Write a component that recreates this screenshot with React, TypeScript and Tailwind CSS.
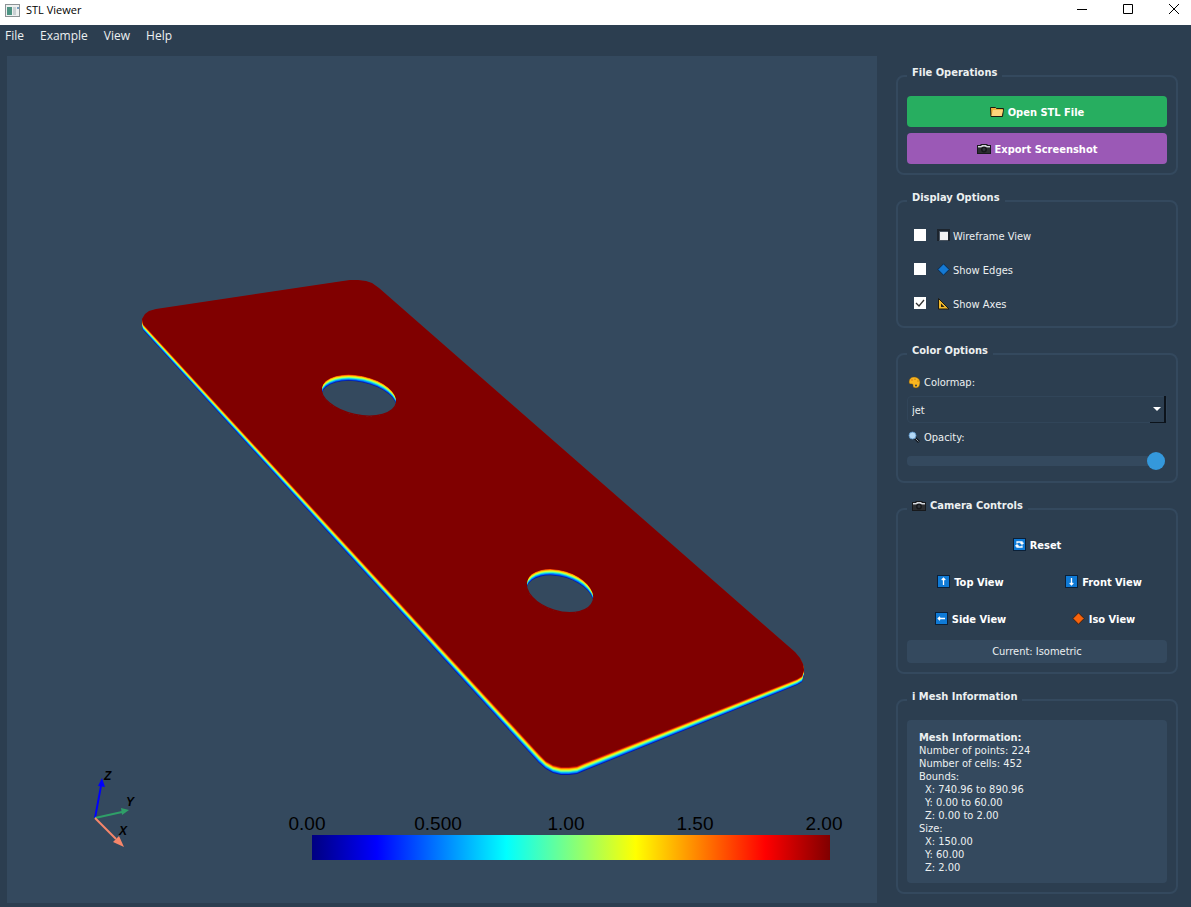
import { ReactNode, useState } from 'react';

const JET = ['#0018b0', '#0060f8', '#00a8ff', '#30f0d0', '#90ff80', '#e8ff20', '#ffc000', '#ff6000', '#c01000'];

// x, y of the top face and how far the bottom face sits below it
const OUTLINE: [number, number, number][] = [
  [143, 324, 6], [142, 319, 6], [145, 314, 5], [149, 311, 5], [156, 309, 5],
  [343, 281, 4], [350, 280, 4], [358, 280, 4], [366, 281, 4], [372, 283, 4], [379, 288, 4],
  [795, 652, 4], [800, 658, 4], [803, 664, 4], [804, 670, 4], [802, 676, 6], [797, 679, 6],
  [584, 763, 8], [577, 766, 8], [569, 767, 8], [561, 767, 8], [553, 765, 8], [546, 761, 8], [539, 754, 9],
];

const HOLES = [
  { id: 'hole-a', cx: 359, cy: 395, rx: 38.4, ry: 20, angle: 12, depth: 7 },
  { id: 'hole-b', cx: 560, cy: 590.5, rx: 34.8, ry: 20.6, angle: 17, depth: 7 },
];

const SCALE = [
  { x: 307, label: '0.00' },
  { x: 438, label: '0.500' },
  { x: 566, label: '1.00' },
  { x: 695, label: '1.50' },
  { x: 824, label: '2.00' },
];

const outlineAt = (t: number) => OUTLINE.map(([x, y, d]) => `${x},${y + d * t}`).join(' ');

function Viewport() {
  return (
    <main className="relative min-w-0 flex-1 bg-[#34495e]">
      <svg viewBox="7 56 870 847" className="absolute inset-0 h-full w-full">
        <defs>
          <linearGradient id="jet">
            <stop offset="0" stopColor="#000080" />
            <stop offset="0.125" stopColor="#0000ff" />
            <stop offset="0.375" stopColor="#00ffff" />
            <stop offset="0.625" stopColor="#ffff00" />
            <stop offset="0.875" stopColor="#ff0000" />
            <stop offset="1" stopColor="#800000" />
          </linearGradient>
          {HOLES.map((h) => (
            <clipPath id={h.id} key={h.id}>
              <ellipse cx={h.cx} cy={h.cy} rx={h.rx} ry={h.ry} transform={`rotate(${h.angle} ${h.cx} ${h.cy})`} />
            </clipPath>
          ))}
        </defs>

        {JET.map((color, i) => (
          <polygon key={color} points={outlineAt(1 - i / JET.length)} fill={color} />
        ))}
        <polygon points={outlineAt(0)} fill="#800000" />

        {HOLES.map((h) => (
          <g key={h.id}>
            <g clipPath={`url(#${h.id})`}>
              {[...JET].reverse().concat('#34495e').map((color, i) => {
                const cy = h.cy + (h.depth * i) / JET.length;
                return (
                  <ellipse key={color} cx={h.cx} cy={cy} rx={h.rx} ry={h.ry} fill={color} transform={`rotate(${h.angle} ${h.cx} ${cy})`} />
                );
              })}
            </g>
            <ellipse cx={h.cx} cy={h.cy} rx={h.rx} ry={h.ry} fill="none" stroke="#800000" strokeWidth="1.500" transform={`rotate(${h.angle} ${h.cx} ${h.cy})`} />
          </g>
        ))}

        {/* orientation axes */}
        <path d="M95 818 101 786" stroke="#0000ff" strokeWidth="2" />
        <path d="M102 778 105 787 98 786Z" fill="#0000ff" />
        <path d="M95 818 122 812" stroke="#2f9f68" strokeWidth="2" />
        <path d="M129 810 121 808 122 815Z" fill="#2f9f68" />
        <path d="M95 818 116 839" stroke="#f7866a" strokeWidth="2" />
        <path d="M124 847 119 836 113 842Z" fill="#f7866a" />
        <g className="fill-black font-['Liberation_Sans'] text-[12px] font-bold italic">
          <text x="104" y="780">Z</text>
          <text x="126" y="806">Y</text>
          <text x="119" y="835">X</text>
        </g>

        <rect x="312" y="835" width="518" height="25" fill="url(#jet)" />
        <g className="fill-black font-['Liberation_Sans'] text-[19px]" textAnchor="middle">
          {SCALE.map((s) => (
            <text key={s.label} x={s.x} y="830">{s.label}</text>
          ))}
        </g>
      </svg>
    </main>
  );
}

function CameraIcon() {
  return (
    <svg viewBox="0 0 14 12" className="h-3 w-3.5">
      <path d="M0 2h3l1-1h6l1 1h3v9H0z" fill="#17191c" />
      <path d="M1 3h3l1-1h4l1 1h3v1.500H1z" fill="#d5d8dc" />
      <path d="M1 5h12v5H1z" fill="#2c2e31" />
      <circle cx="7" cy="6.500" r="3" fill="#17191c" />
      <circle cx="7" cy="6.500" r="1.400" fill="#33383e" />
    </svg>
  );
}

function FolderIcon() {
  return (
    <svg viewBox="0 0 14 12" className="h-3 w-3.5">
      <path d="M.5 1.500h5l1 1h7l-1 8H1z" fill="#f0b440" stroke="#1d1a10" />
      <path d="M3 4h10l-1.500 6H1.500z" fill="#ffd47c" />
    </svg>
  );
}

function ArrowTile({ children }: { children: ReactNode }) {
  return (
    <svg viewBox="0 0 13 13" className="h-[13px] w-[13px]" fill="none" stroke="#fff" strokeWidth="1.300">
      <rect x=".5" y=".5" width="12" height="12" fill="#0f7ad6" stroke="#0b2038" strokeWidth="1" />
      {children}
    </svg>
  );
}

function Group({ title, children }: { title: ReactNode; children: ReactNode }) {
  return (
    <fieldset className="min-w-0 rounded-lg border-2 border-[#34495e] p-[9px]">
      <legend className="flex items-center gap-1 px-[5px] pb-1.5 font-bold leading-4">{title}</legend>
      {children}
    </fieldset>
  );
}

function Check({ label, icon, defaultChecked }: { label: string; icon: ReactNode; defaultChecked?: boolean }) {
  return (
    <label className="flex h-7 items-center gap-[3px] pl-[7px]">
      <span className="relative mr-2 h-3 w-3">
        <input type="checkbox" defaultChecked={defaultChecked} className="peer block h-3 w-3 appearance-none bg-white" />
        <svg viewBox="0 0 12 12" className="pointer-events-none invisible absolute inset-0 h-3 w-3 peer-checked:visible">
          <path d="M2 6 5 9 10 3" fill="none" stroke="#333" strokeWidth="1.300" />
        </svg>
      </span>
      {icon}
      <span className="pt-0.5">{label}</span>
    </label>
  );
}

function ViewButton({ icon, label, onClick }: { icon: ReactNode; label: string; onClick: () => void }) {
  return (
    <button onClick={onClick} className="flex h-[31px] items-center justify-center gap-1 font-bold text-white">
      {icon}
      <span className="pt-0.5">{label}</span>
    </button>
  );
}

export default function App() {
  const [view, setView] = useState('Isometric');

  return (
    <div className="flex min-h-screen flex-col bg-[#2c3e50] font-['DejaVu_Sans_Condensed','DejaVu_Sans',sans-serif] text-[11px] leading-[17px] text-[#ecf0f1]">
      <header className="flex h-[25px] items-start justify-between bg-white font-['Open_Sans'] text-black">
        <div className="flex items-center gap-1.5 pl-[5px] leading-5">
          <svg viewBox="0 0 15 13" className="h-[13px] w-[15px]">
            <rect x=".5" y=".5" width="14" height="12" fill="#eef0f0" stroke="#8d9396" />
            <rect x="2" y="3" width="5" height="8" fill="#4d9483" />
            <rect x="8" y="3" width="3" height="8" fill="#c9d0d3" />
            <rect x="12" y="3" width="2" height="2" fill="#7a9fc0" />
          </svg>
          <h1>STL Viewer</h1>
        </div>
        <div className="flex h-[18px] gap-9 pr-3">
          <button aria-label="Minimize">
            <svg viewBox="0 0 10 10" className="h-2.5 w-2.5"><path d="M0 5.500h10" stroke="#000" /></svg>
          </button>
          <button aria-label="Maximize">
            <svg viewBox="0 0 10 10" className="h-2.5 w-2.5"><path d="M.5.5h9v9h-9z" fill="none" stroke="#000" /></svg>
          </button>
          <button aria-label="Close">
            <svg viewBox="0 0 10 10" className="h-2.5 w-2.5"><path d="M0 0 10 10M10 0 0 10" stroke="#000" /></svg>
          </button>
        </div>
      </header>

      <nav className="flex h-[25px] gap-4 px-[5px] font-['Open_Sans'] text-[12px] leading-[22px]">
        <button className="self-start">File</button>
        <button className="self-start">Example</button>
        <button className="self-start">View</button>
        <button className="self-start">Help</button>
      </nav>

      <div className="flex flex-1 gap-[19px] pb-1 pl-[7px] pr-[13px] pt-1.5">
        <Viewport />

        <aside className="flex w-[282px] shrink-0 flex-col gap-[15px] pb-2 pt-[9px]">
          <Group title="File Operations">
            <div className="flex flex-col gap-1.5 font-bold text-white">
              <button className="flex h-[31px] items-center justify-center gap-1 rounded bg-[#27ae60]">
                <FolderIcon />
                <span className="pt-0.5">Open STL File</span>
              </button>
              <button className="flex h-[31px] items-center justify-center gap-1 rounded bg-[#9b59b6]">
                <CameraIcon />
                <span className="pt-0.5">Export Screenshot</span>
              </button>
            </div>
          </Group>

          <Group title="Display Options">
            <div className="flex flex-col gap-1.5">
              <Check
                label="Wireframe View"
                icon={
                  <svg viewBox="0 0 13 13" className="h-[13px] w-[13px]">
                    <path d="M0 0h13v3H0zM0 0h2v12H0zM11 2h2v10h-2z" fill="#1c242d" />
                    <rect x="2" y="2" width="9" height="10" fill="#4a5561" />
                    <rect x="3" y="3" width="8" height="8" fill="#f2f2f2" />
                  </svg>
                }
              />
              <Check
                label="Show Edges"
                icon={
                  <svg viewBox="0 0 13 13" className="h-[13px] w-[13px]">
                    <path d="M6.500.8 12.200 6.500 6.500 12.200.8 6.500Z" fill="#1479d4" stroke="#0b2a4c" />
                  </svg>
                }
              />
              <Check
                label="Show Axes"
                defaultChecked
                icon={
                  <svg viewBox="0 0 13 13" className="h-[13px] w-[13px]">
                    <path d="M1.500 1.500 12 12H1.500Z" fill="#f0b92c" stroke="#1e1a10" />
                    <path d="M4 6.500 7.500 10H4Z" fill="#2a2213" />
                  </svg>
                }
              />
            </div>
          </Group>

          <Group title="Color Options">
            <div className="flex flex-col gap-1.5">
              <label htmlFor="colormap" className="flex h-4 items-center gap-[3px] pl-px">
                <svg viewBox="0 0 13 13" className="h-[13px] w-[13px]">
                  <path d="M6 1C3 1 1 3 1 6c0 2 1 2 3 2 1 0 1 1 1 2 0 1 1 2 3 2 3 0 4-3 4-6 0-3-3-5-6-5Z" fill="#f9b61f" stroke="#5e4215" strokeWidth=".5" />
                  <circle cx="4" cy="4" r=".8" fill="#e0701c" />
                  <circle cx="7" cy="3.200" r=".8" fill="#c98a12" />
                  <circle cx="10" cy="5" r=".8" fill="#c98a12" />
                  <circle cx="8" cy="9.500" r="1" fill="#2c3e50" />
                </svg>
                Colormap:
              </label>
              <div className="relative">
                <select id="colormap" defaultValue="jet" className="block h-[27px] w-full appearance-none rounded-sm border border-[#314559] bg-[#2c3e50] px-1 pt-0.5">
                  <option>jet</option>
                  <option>viridis</option>
                  <option>plasma</option>
                </select>
                <span className="pointer-events-none absolute inset-y-0 right-px flex w-4 items-center justify-center border-b border-r-2 border-[#0c131b]">
                  <svg viewBox="0 0 8 4" className="h-1 w-2"><path d="M0 0h8L4 4Z" fill="#fff" /></svg>
                </span>
              </div>
              <label htmlFor="opacity" className="flex h-4 items-center gap-[3px] pl-px">
                <svg viewBox="0 0 13 13" className="h-[13px] w-[13px]">
                  <path d="M7 7 11 11" stroke="#10161d" strokeWidth="2.600" />
                  <path d="M7.500 7.500 10.500 10.500" stroke="#8a98a5" strokeWidth="1" />
                  <circle cx="4.500" cy="4.500" r="3.500" fill="#b5daf7" stroke="#5a93c5" strokeWidth=".8" />
                </svg>
                Opacity:
              </label>
              <input
                id="opacity"
                type="range"
                defaultValue={100}
                className="block h-5 w-full appearance-none bg-transparent pr-0.5 [&::-webkit-slider-runnable-track]:h-2.5 [&::-webkit-slider-runnable-track]:rounded [&::-webkit-slider-runnable-track]:bg-[#34495e] [&::-webkit-slider-thumb]:-mt-1 [&::-webkit-slider-thumb]:h-[18px] [&::-webkit-slider-thumb]:w-[18px] [&::-webkit-slider-thumb]:appearance-none [&::-webkit-slider-thumb]:rounded-full [&::-webkit-slider-thumb]:bg-[#3498db]"
              />
            </div>
            <div className="h-px" />
          </Group>

          <Group title={<><CameraIcon />Camera Controls</>}>
            <div className="grid grid-cols-2 gap-1.5">
              <div className="col-span-2 grid">
                <ViewButton
                  label="Reset"
                  onClick={() => setView('Isometric')}
                  icon={<ArrowTile><path d="M4 5.500V4h5v2M7.500 4.700 9 6.200l1.500-1.500M9 7.500V9H4V7M2.500 8.300 4 6.800l1.500 1.500" /></ArrowTile>}
                />
              </div>
              <ViewButton label="Top View" onClick={() => setView('Top')} icon={<ArrowTile><path d="M6.500 10V3.500M4.700 5 6.500 3.200 8.300 5" /></ArrowTile>} />
              <ViewButton label="Front View" onClick={() => setView('Front')} icon={<ArrowTile><path d="M6.500 3V9.500M4.700 8 6.500 9.800 8.300 8" /></ArrowTile>} />
              <ViewButton label="Side View" onClick={() => setView('Side')} icon={<ArrowTile><path d="M10 6.500H3.500M5 4.700 3.200 6.500 5 8.300" /></ArrowTile>} />
              <ViewButton
                label="Iso View"
                onClick={() => setView('Isometric')}
                icon={
                  <svg viewBox="0 0 13 13" className="h-[13px] w-[13px]">
                    <path d="M6.500.8 12.200 6.500 6.500 12.200.8 6.500Z" fill="#f7630c" stroke="#3a2015" />
                  </svg>
                }
              />
              <p className="col-span-2 rounded-sm bg-[#34495e] text-center leading-[23px]">Current: {view}</p>
            </div>
          </Group>

          <Group title="i Mesh Information">
            <div className="rounded bg-[#34495e] px-3 pb-[9px] pt-[11px] leading-[13px]">
              <h2 className="font-bold">Mesh Information:</h2>
              <p>Number of points: 224</p>
              <p>Number of cells: 452</p>
              <p>Bounds:</p>
              <div className="pl-1.5">
                <p>X: 740.96 to 890.96</p>
                <p>Y: 0.00 to 60.00</p>
                <p>Z: 0.00 to 2.00</p>
              </div>
              <p>Size:</p>
              <div className="pl-1.5">
                <p>X: 150.00</p>
                <p>Y: 60.00</p>
                <p>Z: 2.00</p>
              </div>
            </div>
          </Group>
        </aside>
      </div>
    </div>
  );
}
